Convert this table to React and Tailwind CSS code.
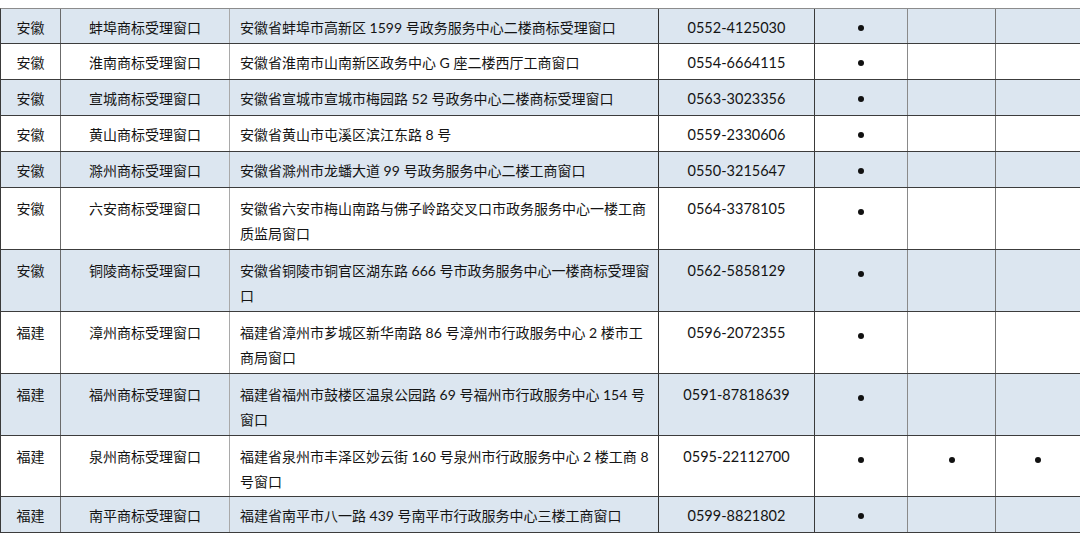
import React from 'react';

const rows = [
    { prov: '安徽', name: '蚌埠商标受理窗口', addr: ['安徽省蚌埠市高新区 1599 号政务服务中心二楼商标受理窗口'], tel: '0552-4125030', dots: [1, 0, 0] },
    { prov: '安徽', name: '淮南商标受理窗口', addr: ['安徽省淮南市山南新区政务中心 G 座二楼西厅工商窗口'], tel: '0554-6664115', dots: [1, 0, 0] },
    { prov: '安徽', name: '宣城商标受理窗口', addr: ['安徽省宣城市宣城市梅园路 52 号政务中心二楼商标受理窗口'], tel: '0563-3023356', dots: [1, 0, 0] },
    { prov: '安徽', name: '黄山商标受理窗口', addr: ['安徽省黄山市屯溪区滨江东路 8 号'], tel: '0559-2330606', dots: [1, 0, 0] },
    { prov: '安徽', name: '滁州商标受理窗口', addr: ['安徽省滁州市龙蟠大道 99 号政务服务中心二楼工商窗口'], tel: '0550-3215647', dots: [1, 0, 0] },
    { prov: '安徽', name: '六安商标受理窗口', addr: ['安徽省六安市梅山南路与佛子岭路交叉口市政务服务中心一楼工商', '质监局窗口'], tel: '0564-3378105', dots: [1, 0, 0] },
    { prov: '安徽', name: '铜陵商标受理窗口', addr: ['安徽省铜陵市铜官区湖东路 666 号市政务服务中心一楼商标受理窗', '口'], tel: '0562-5858129', dots: [1, 0, 0] },
    { prov: '福建', name: '漳州商标受理窗口', addr: ['福建省漳州市芗城区新华南路 86 号漳州市行政服务中心 2 楼市工', '商局窗口'], tel: '0596-2072355', dots: [1, 0, 0] },
    { prov: '福建', name: '福州商标受理窗口', addr: ['福建省福州市鼓楼区温泉公园路 69 号福州市行政服务中心 154 号', '窗口'], tel: '0591-87818639', dots: [1, 0, 0] },
    { prov: '福建', name: '泉州商标受理窗口', addr: ['福建省泉州市丰泽区妙云街 160 号泉州市行政服务中心 2 楼工商 8', '号窗口'], tel: '0595-22112700', dots: [1, 1, 1] },
    { prov: '福建', name: '南平商标受理窗口', addr: ['福建省南平市八一路 439 号南平市行政服务中心三楼工商窗口'], tel: '0599-8821802', dots: [1, 0, 0] },
];

function Dot({ on }) {
    if (!on) return null;
    return <span className="block w-[6px] h-[6px] rounded-full bg-[#111] mt-[3px]" />;
}

function Row({ row, index }) {
    const tall = row.addr.length > 1;
    const band = index % 2 === 0 ? 'bg-[#dce6f0]' : 'bg-white';
    const height = index === 0 ? 'h-[35px]' : tall ? (index === 9 ? 'h-[61px]' : 'h-[62px]') : 'h-[36px]';
    const cell = tall ? 'flex pt-[8px]' : 'flex items-center pt-[2px]';
    const dotCell = tall ? 'flex justify-center pt-[18px]' : 'flex justify-center items-center';
    return (
        <div className={`flex ${height} ${band} border-b border-[#3c3c3c]`}>
            <div className={`${cell} justify-center w-[60px] shrink-0 border-r border-[#6b6b6b]`}>{row.prov}</div>
            <div className={`${cell} justify-center w-[169px] shrink-0 border-r border-[#a9a9a9]`}>{row.name}</div>
            <div className={`${cell} w-[429px] shrink-0 pl-[10px] border-r border-[#333]`}>
                <div>
                    {row.addr.map((line, i) => (
                        <div key={i}>{line}</div>
                    ))}
                </div>
            </div>
            <div className={`${cell} justify-center w-[156px] shrink-0 border-r border-[#3a3a3a] text-[14.5px]`}>{row.tel}</div>
            <div className={`${dotCell} w-[93px] shrink-0 border-r border-[#8a8a8a]`}>
                <Dot on={row.dots[0]} />
            </div>
            <div className={`${dotCell} w-[88px] shrink-0 border-r border-[#777]`}>
                <Dot on={row.dots[1]} />
            </div>
            <div className={`${dotCell} flex-1`}>
                <Dot on={row.dots[2]} />
            </div>
        </div>
    );
}

export default function App() {
    return (
        <div className="w-[1080px] h-[540px] bg-white overflow-hidden pt-[8px] font-['Lato','Noto_Sans_CJK_SC',sans-serif] text-[14px] leading-[25px] text-[#141414]">
            <div className="border-t border-l border-[#8c8c8c] border-l-[#3a3a3a]">
                {rows.map((row, i) => (
                    <Row key={i} row={row} index={i} />
                ))}
            </div>
        </div>
    );
}
